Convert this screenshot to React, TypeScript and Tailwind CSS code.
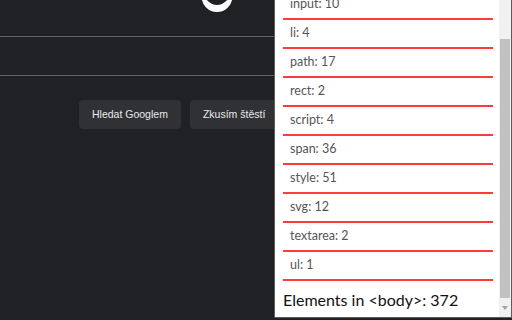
const counts: [string, number][] = [
  ['input', 10],
  ['li', 4],
  ['path', 17],
  ['rect', 2],
  ['script', 4],
  ['span', 36],
  ['style', 51],
  ['svg', 12],
  ['textarea', 2],
  ['ul', 1],
]

const total = 372

function Logo() {
  // only the bottom of the wordmark's "g" peeks in at the top edge
  return (
    <svg width="34" height="13" viewBox="0 0 34 13" className="block">
      <path
        fillRule="evenodd"
        fill="#ffffff"
        d="M1.6 -3.4a15.4 15.4 0 1 0 30.8 0a15.4 15.4 0 1 0 -30.8 0zM4.5 -7.5a12.5 12.5 0 1 0 25 0a12.5 12.5 0 1 0 -25 0z"
      />
    </svg>
  )
}

function CounterPanel() {
  return (
    <div className="absolute right-0 top-0 flex h-[318px] w-[238px] border-x border-b border-[#5c5c5c] bg-white">
      <div className="flex-1 overflow-hidden pl-2 pr-[6px]" style={{ fontFamily: 'Lato, "Open Sans", sans-serif' }}>
        <ul className="-mt-[9px]">
          {counts.map(([tag, n]) => (
            <li
              key={tag}
              className="flex h-[29px] items-center border-b-2 border-[#ff3b3b] pl-[7px] text-[12.5px] text-[#555]"
            >
              {tag}: {n}
            </li>
          ))}
        </ul>
        <p className="mt-[5px] text-[16px] leading-[27px] text-[#111]">
          Elements in &lt;body&gt;: {total}
        </p>
      </div>
      <div className="flex w-[12px] flex-col bg-[#f1f1f1]">
        <div className="mx-[1px] mt-[39px] h-[259px] bg-[#c1c1c1]" />
        <div className="flex flex-1 items-center justify-center">
          <svg width="6" height="4" viewBox="0 0 6 4">
            <path d="M0 0h6L3 4z" fill="#a3a3a3" />
          </svg>
        </div>
      </div>
    </div>
  )
}

export default function App() {
  return (
    <div
      className="relative h-[320px] w-[512px] overflow-hidden bg-[#202124]"
      style={{ fontFamily: '"Liberation Sans", Arial, sans-serif' }}
    >
      <div className="pl-[200px]">
        <Logo />
      </div>
      <div className="mt-[23px] h-[40px] border-y border-[#5f6368]" />
      <div className="mt-[24px] flex gap-[9px] pl-[79px]">
        <button className="h-[29px] rounded-[4px] bg-[#303134] px-[13px] text-[10.5px] text-[#e8eaed]">
          Hledat Googlem
        </button>
        <button className="h-[29px] rounded-[4px] bg-[#303134] px-[13px] text-[10.5px] text-[#e8eaed]">
          Zkusím štěstí
        </button>
      </div>
      <CounterPanel />
    </div>
  )
}
